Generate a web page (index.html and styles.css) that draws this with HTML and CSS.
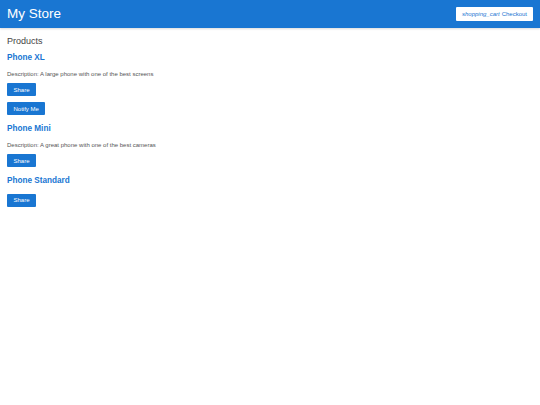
FILE: index.html
```html
<!DOCTYPE html>
<html>
<head>
<meta charset="utf-8">
<link rel="stylesheet" href="styles.css">
</head>
<body>
<header class="top-bar">
  <a class="brand">My Store</a>
  <a class="checkout"><i>shopping_cart</i> Checkout</a>
</header>
<main class="container">
  <h2 class="heading">Products</h2>
  <div class="product">
    <h3 class="name">Phone XL</h3>
    <p class="desc">Description: A large phone with one of the best screens</p>
    <button class="btn">Share</button>
    <button class="btn">Notify Me</button>
  </div>
  <div class="product">
    <h3 class="name">Phone Mini</h3>
    <p class="desc">Description: A great phone with one of the best cameras</p>
    <button class="btn">Share</button>
  </div>
  <div class="product">
    <h3 class="name">Phone Standard</h3>
    <button class="btn">Share</button>
  </div>
</main>
</body>
</html>
```
FILE: styles.css
```css
* { box-sizing: border-box; }
body {
  margin: 0;
  font-family: "Liberation Sans", Arial, sans-serif;
  background: #fff;
  color: #333;
}
.top-bar {
  height: 28px;
  background: #1976d2;
  display: flex;
  align-items: center;
  justify-content: space-between;
  padding: 0 7px;
  box-shadow: 0 1px 2px rgba(0,0,0,0.15);
}
.brand {
  color: #fff;
  font-size: 13.5px;
  line-height: 1;
}
.checkout {
  background: #fff;
  color: #1976d2;
  font-size: 6px;
  height: 14px;
  width: 77px;
  display: flex;
  align-items: center;
  justify-content: center;
  border-radius: 1px;
}
.checkout i { margin-right: 2px; }
.container {
  padding: 0 7px;
}
.heading {
  font-size: 9px;
  line-height: 10px;
  font-weight: normal;
  margin: 7.5px 0 7px;
  color: #444;
}
.product {
  display: flex;
  flex-direction: column;
  align-items: flex-start;
  margin-bottom: 2.5px;
}
.name {
  font-size: 8.2px;
  line-height: 10px;
  color: #1976d2;
  margin: 0 0 8px;
}
.desc {
  font-size: 6px;
  line-height: 8px;
  color: #555;
  margin: -1px 0 5.5px;
}
.btn {
  font-family: inherit;
  font-size: 6px;
  background: #1976d2;
  color: #fff;
  border: none;
  border-radius: 1px;
  height: 13px;
  padding: 0 6.5px;
  margin: 0 0 6px;
}
```
